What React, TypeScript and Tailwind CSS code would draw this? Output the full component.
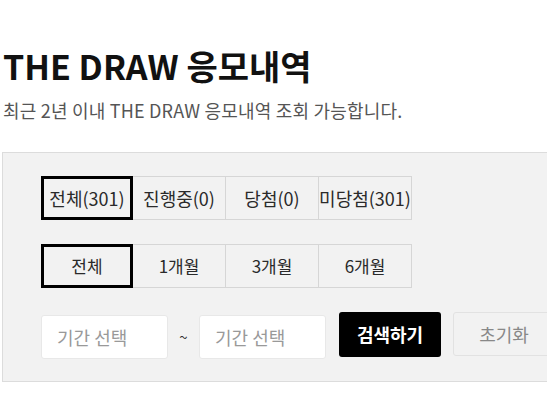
const statusTabs = [
  { label: "전체(301)", active: true },
  { label: "진행중(0)", active: false },
  { label: "당첨(0)", active: false },
  { label: "미당첨(301)", active: false },
];

const periodTabs = [
  { label: "전체", active: true },
  { label: "1개월", active: false },
  { label: "3개월", active: false },
  { label: "6개월", active: false },
];

type Tab = { label: string; active: boolean };

function TabGroup({ tabs, size }: { tabs: Tab[]; size: string }) {
  return (
    <div className="flex">
      {tabs.map((tab) => (
        <button
          key={tab.label}
          className={`h-[44px] flex items-center justify-center whitespace-nowrap text-[#2a2a2a] ${size} ${
            tab.active
              ? "w-[92px] border-[3px] border-black relative z-10"
              : "w-[94px] -ml-px border border-[#d6d6d6]"
          }`}
        >
          {tab.label}
        </button>
      ))}
    </div>
  );
}

export default function App() {
  return (
    <div
      className="w-[547px] h-[409px] overflow-hidden bg-white"
      style={{ fontFamily: '"Noto Sans CJK KR", "Noto Sans", sans-serif' }}
    >
      {/* 페이지 타이틀 */}
      <div className="pl-[3px] pt-[43px]">
        <h1 className="text-[34px] font-bold leading-[46px] text-[#111]">
          THE DRAW 응모내역
        </h1>
        <p className="mt-[9px] text-[18px] leading-[24px] tracking-[0.2px] text-[#555]">
          최근 2년 이내 THE DRAW 응모내역 조회 가능합니다.
        </p>
      </div>

      {/* 검색 필터 */}
      <div className="ml-[2px] mt-[30px] w-[600px] border border-[#dcdcdc] bg-[#f2f2f2] pl-[38px] pt-[23px] pb-[22px]">
        <TabGroup tabs={statusTabs} size="text-[18px]" />
        <div className="mt-[24px]">
          <TabGroup tabs={periodTabs} size="text-[17px]" />
        </div>

        <div className="mt-[24px] flex items-start">
          <div className="mt-[3px] h-[44px] w-[127px] rounded-[3px] border border-[#e8e8e8] bg-white pl-[15px] flex items-center text-[18px] text-[#999]">
            기간 선택
          </div>
          <span className="mt-[3px] h-[44px] w-[31px] flex items-center justify-center text-[15px] text-[#333]">
            ~
          </span>
          <div className="mt-[3px] h-[44px] w-[127px] rounded-[3px] border border-[#e8e8e8] bg-white pl-[15px] flex items-center text-[18px] text-[#999]">
            기간 선택
          </div>
          <button className="ml-[13px] h-[45px] w-[102px] rounded-[3px] bg-black text-[18px] font-bold text-white">
            검색하기
          </button>
          <button className="ml-[12px] h-[44px] w-[102px] rounded-[3px] border border-[#e2e2e2] bg-[#f2f2f2] text-[18px] text-[#888]">
            초기화
          </button>
        </div>
      </div>
    </div>
  );
}
